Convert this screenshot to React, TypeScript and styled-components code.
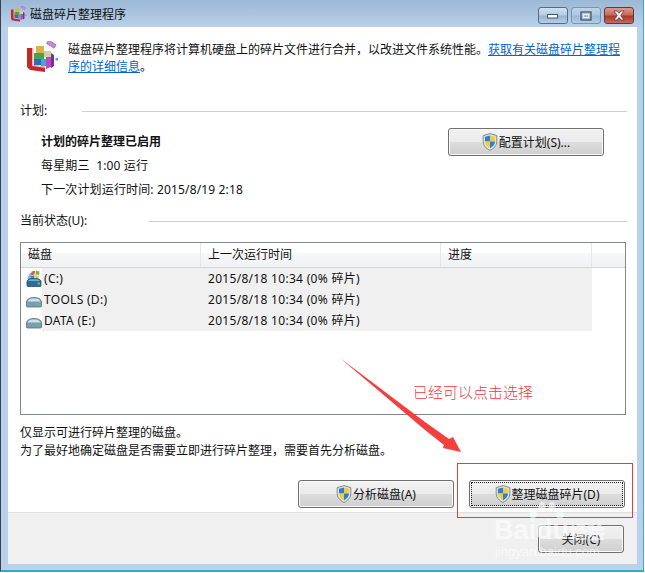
import React from "react";
import styled, { createGlobalStyle } from "styled-components";

const Global = createGlobalStyle`
  html, body {
    margin: 0;
    padding: 0;
    background: #fff;
  }
  body {
    font-family: "Noto Sans", "Noto Sans CJK SC", sans-serif;
    font-size: 12px;
    color: #111;
  }
`;

const Shield = ({ size = 16 }: { size?: number }) => (
  <svg width={size} height={size + 2} viewBox="0 0 16 18">
    <path d="M8 .6 L14.8 2.6 V8.5 C14.8 12.6 11.8 15.6 8 17.4 C4.2 15.6 1.2 12.6 1.2 8.5 V2.6 Z" fill="#dfe3e6" stroke="#7d8a94" strokeWidth="1" />
    <path d="M8 2.4 L3 3.8 V8.5 L8 8.5 Z" fill="#2f7fd0" />
    <path d="M8 2.4 L13 3.8 V8.5 L8 8.5 Z" fill="#f4cc3a" />
    <path d="M3 8.5 H8 V15.2 C5.2 13.8 3 11.6 3 8.5 Z" fill="#f4cc3a" />
    <path d="M13 8.5 H8 V15.2 C10.8 13.8 13 11.6 13 8.5 Z" fill="#2f7fd0" />
  </svg>
);

const DefragIcon = ({ size }: { size: number }) => (
  <svg width={size} height={size} viewBox="0 0 32 32">
    <rect x="20" y="1.5" width="9" height="4" transform="rotate(32 25 3)" fill="#c88ad8" stroke="#9a5bb0" strokeWidth=".6" />
    <path d="M0 7 H6 V24 L18 26 V31 L3 29 L0 26 Z" fill="#c22a2a" />
    <path d="M5 7 H6.5 V23.5 L18 25.5 V27 L5 25 Z" fill="#eeb4ac" />
    <rect x="9" y="5" width="8" height="7" fill="#d9b24a" />
    <rect x="7" y="12" width="10" height="6" fill="#3fa84c" />
    <rect x="7" y="18" width="7" height="6" fill="#3566c4" />
    <rect x="14" y="18" width="5" height="7" fill="#49a3d8" />
    <rect x="17" y="10" width="7" height="6" fill="#c9d3a0" />
    <path d="M19 16 H24 V26 L19 28 Z" fill="#b84ac0" />
    <path d="M24 12 L27 14 V25 L24 27 Z" fill="#7a2f92" />
    <rect x="28.5" y="17" width="2.5" height="2.5" fill="#3aa7e0" />
  </svg>
);

const DriveIcon = ({ system }: { system?: boolean }) => (
  <svg width="16" height="17" viewBox="0 0 16 17">
    {system && (
      <g>
        <path d="M1 9 L4 3 H6 L4 9 Z" fill="#7fb2e6" />
        <path d="M5.5 1.5 L9 .8 L8.6 4.6 L5 5.2 Z" fill="#dc5a3c" />
        <path d="M9.8 .8 L13.6 1.4 L13 5 L9.4 4.5 Z" fill="#78b642" />
        <path d="M4.8 5.8 L8.5 5.2 L8.2 9 L4.4 9.4 Z" fill="#3a86d6" />
        <path d="M9.3 5.2 L12.9 5.7 L12.4 9.2 L9 8.9 Z" fill="#f0c63a" />
      </g>
    )}
    <path
      d={system ? "M1 11 C2 9 4 8.5 8 8.5 C12 8.5 14 9 15 11 V15.5 Q15 16.5 14 16.5 H2 Q1 16.5 1 15.5 Z" : "M.5 10.5 C1.5 7.5 4 6.5 8 6.5 C12 6.5 14.5 7.5 15.5 10.5 V15 Q15.5 16 14.5 16 H1.5 Q.5 16 .5 15 Z"}
      fill={system ? "#2f6a9c" : "#7a9db5"}
      stroke={system ? "#24506f" : "#56707f"}
      strokeWidth=".8"
    />
    {!system && <path d="M1.5 10.5 C2.5 8 5 7.5 8 7.5 C11 7.5 13.5 8 14.5 10.5 Z" fill="#cfe0ea" />}
    {system && <path d="M2 11 C3 9.6 5 9.3 8 9.3 C11 9.3 13 9.6 14 11 Z" fill="#79aed6" />}
    <rect x="11.6" y="12.4" width="2.4" height="2.2" fill="#5cc45c" />
  </svg>
);

function MinGlyph() {
  return (
    <svg width="12" height="6" viewBox="0 0 12 6">
      <rect x=".5" y="1.5" width="10" height="3.5" fill="#fff" stroke="#46586c" />
    </svg>
  );
}

function MaxGlyph() {
  return (
    <svg width="12" height="10" viewBox="0 0 12 10">
      <rect x="1" y="1" width="10" height="8" fill="none" stroke="#3f4f60" strokeWidth="1.2" />
      <rect x="3.5" y="3.5" width="5" height="3" fill="none" stroke="#e8f0f8" strokeWidth="1" />
    </svg>
  );
}

function CloseGlyph() {
  return (
    <svg width="14" height="11" viewBox="0 0 14 11">
      <path d="M2 1 H5 L7 3.3 L9 1 H12 L8.7 5.5 L12 10 H9 L7 7.6 L5 10 H2 L5.3 5.5 Z" fill="#f4f4f4" stroke="#54303a" strokeWidth=".7" />
    </svg>
  );
}

const Frame = styled.div`
  width: 644px;
  height: 572px;
  display: flex;
  flex-direction: column;
  background: #b9d1ea;
  border-left: 1px solid #39424c;
  border-right: 1px solid #2bb0c4;
  border-bottom: 2px solid #2bb0c4;
  box-sizing: border-box;
`;

const TitleBar = styled.div`
  height: 27px;
  flex: none;
  display: flex;
  align-items: center;
  padding: 0 9px 0 10px;
  background: linear-gradient(#9cb8d5, #b9d1ea);
`;

const TitleText = styled.span`
  margin-left: 3px;
  font-size: 12px;
  color: #111;
  flex: 1;
`;

const CaptionGroup = styled.div`
  display: flex;
  gap: 3px;
  align-self: flex-start;
  margin-top: 7px;
`;

const CaptionButton = styled.div<{ $kind: "min" | "max" | "close" }>`
  width: 30px;
  height: 17px;
  box-sizing: border-box;
  display: flex;
  align-items: center;
  justify-content: center;
  border-radius: 3px;
  border: 1px solid ${(p) => (p.$kind === "close" ? "#5c3a3e" : p.$kind === "min" ? "#566a80" : "#7f93a8")};
  background: ${(p) =>
    p.$kind === "close"
      ? "linear-gradient(#d89a8c 0%, #c96b5c 45%, #a83a2c 55%, #c9695c 100%)"
      : p.$kind === "min"
        ? "linear-gradient(#cfe0f0 0%, #b5cde4 45%, #97b4d2 55%, #b6cfe6 100%)"
        : "linear-gradient(#bed3e8 0%, #afc8e0 45%, #9db9d6 55%, #b4cde6 100%)"};
`;

const Client = styled.div`
  flex: 1;
  margin: 0 6px 6px 7px;
  display: flex;
  flex-direction: column;
  background: #fff;
  min-height: 0;
`;

const Main = styled.div`
  flex: 1;
  padding: 14px 10px 0 12px;
`;

const Intro = styled.div`
  display: flex;
  gap: 9px;
  padding-left: 7px;
`;

const IntroText = styled.p`
  margin: 0;
  line-height: 17px;
  width: 556px;
`;

const Link = styled.a`
  color: #0066cc;
  text-decoration: underline;
`;

const GroupHeading = styled.div<{ $top: number; $gap: number }>`
  display: flex;
  align-items: center;
  gap: ${(p) => p.$gap}px;
  margin-top: ${(p) => p.$top}px;
  height: 16px;
  line-height: 16px;
`;

const Rule = styled.div`
  flex: 1;
  height: 1px;
  background: #cfcfcf;
`;

const Schedule = styled.div`
  display: flex;
  justify-content: space-between;
  align-items: flex-start;
  padding: 9px 23px 0 21px;
`;

const ScheduleLines = styled.div`
  display: flex;
  flex-direction: column;
  gap: 8px;
  padding-top: 6px;
`;

const ScheduleLine = styled.div<{ $bold?: boolean }>`
  line-height: 16px;
  font-weight: ${(p) => (p.$bold ? 700 : 400)};
  letter-spacing: ${(p) => (p.$bold ? 0 : 0.15)}px;
`;

const Button = styled.div<{ $w: number; $focus?: boolean }>`
  width: ${(p) => p.$w}px;
  height: 28px;
  box-sizing: border-box;
  display: flex;
  align-items: center;
  justify-content: center;
  gap: 1px;
  border: 1px solid #6f6f6f;
  border-radius: 3px;
  background: linear-gradient(#f2f2f2 0%, #ebebeb 48%, #dcdcdc 52%, #cfcfcf 100%);
  box-shadow: inset 0 0 0 1px #fafafa;
  color: #111;
  outline: ${(p) => (p.$focus ? "1px dotted #222" : "none")};
  outline-offset: -3px;
`;

const DiskList = styled.div`
  margin: 13px 1px 0 0;
  height: 173px;
  box-sizing: border-box;
  border: 1px solid #828790;
  display: flex;
  flex-direction: column;
`;

const ListHead = styled.div`
  display: grid;
  grid-template-columns: 180px 240px 151px 1fr;
  height: 25px;
  flex: none;
  border-bottom: 1px solid #d5d5d5;
  box-sizing: border-box;
  background: linear-gradient(#fff 0%, #fff 40%, #f6f7f9 42%, #f1f2f4 100%);
`;

const HeadCell = styled.div`
  border-right: 1px solid #e4e6e9;
  padding-left: 7px;
  line-height: 24px;
  &:last-child {
    border-right: 0;
  }
`;

const Row = styled.div`
  display: grid;
  grid-template-columns: 180px 240px 151px;
  height: 21px;
`;

const DiskCell = styled.div`
  display: flex;
  align-items: center;
  padding-left: 5px;
`;

const Shade = styled.div`
  background: #f0f0f0;
  height: 21px;
  flex: 1;
  padding-left: 2px;
  line-height: 21px;
  letter-spacing: 0.3px;
`;

const TimeCell = styled.div`
  background: #f0f0f0;
  padding-left: 7px;
  line-height: 21px;
  letter-spacing: 0.3px;
`;

const EmptyCell = styled.div`
  background: #f0f0f0;
`;

const Note = styled.div`
  margin-top: 9px;
  line-height: 18px;
`;

const ActionRow = styled.div`
  display: flex;
  justify-content: flex-end;
  gap: 15px;
  padding-right: 2px;
  margin-top: 20px;
`;

const Footer = styled.div`
  height: 52px;
  flex: none;
  box-sizing: border-box;
  background: #f0f0f0;
  border-top: 1px solid #dfdfdf;
  display: flex;
  justify-content: flex-end;
  padding: 12px 13px 0 0;
`;

const CloseButton = styled(Button)`
  color: #222;
`;

const ArrowLayer = styled.svg`
  position: absolute;
  left: 0;
  top: 0;
  pointer-events: none;
`;

const Remark = styled.div`
  position: absolute;
  left: 413px;
  top: 382px;
  font-size: 15px;
  line-height: 20px;
  color: #f03a3a;
  font-family: "Noto Sans CJK SC", sans-serif;
  font-weight: 300;
`;

const Highlight = styled.div`
  position: absolute;
  left: 457px;
  top: 463px;
  width: 176px;
  height: 55px;
  border: 1px solid #ee3a3a;
  box-sizing: border-box;
`;

const Watermark = styled.div`
  position: absolute;
  left: 494px;
  top: 515px;
  color: rgba(255, 255, 255, 0.6);
  font-family: "Liberation Sans", sans-serif;
  font-weight: 700;
  font-size: 27px;
  line-height: 30px;
  white-space: nowrap;
`;

const WatermarkCn = styled.span`
  font-family: "Noto Sans CJK SC", sans-serif;
  font-size: 18px;
`;

const WatermarkUrl = styled.div`
  font-size: 13px;
  line-height: 16px;
  margin-left: 1px;
  margin-top: -2px;
  font-weight: 400;
`;

const Paw = styled.svg`
  position: absolute;
  left: 528px;
  top: 502px;
`;

const Page = styled.div`
  position: relative;
  width: 645px;
  height: 573px;
  overflow: hidden;
`;

const disks = [
  { name: "(C:)", system: true },
  { name: "TOOLS (D:)" },
  { name: "DATA (E:)" },
];

export default function App() {
  return (
    <Page>
      <Global />
      <Frame>
        <TitleBar>
          <DefragIcon size={16} />
          <TitleText>磁盘碎片整理程序</TitleText>
          <CaptionGroup>
            <CaptionButton $kind="min"><MinGlyph /></CaptionButton>
            <CaptionButton $kind="max"><MaxGlyph /></CaptionButton>
            <CaptionButton $kind="close"><CloseGlyph /></CaptionButton>
          </CaptionGroup>
        </TitleBar>
        <Client>
          <Main>
            <Intro>
              <DefragIcon size={32} />
              <IntroText>
                磁盘碎片整理程序将计算机硬盘上的碎片文件进行合并，以改进文件系统性能。
                <Link>获取有关磁盘碎片整理程序的详细信息</Link>。
              </IntroText>
            </Intro>
            <GroupHeading $top={28} $gap={35}>
              <span>计划:</span>
              <Rule />
            </GroupHeading>
            <Schedule>
              <ScheduleLines>
                <ScheduleLine $bold>计划的碎片整理已启用</ScheduleLine>
                <ScheduleLine>每星期三&nbsp;&nbsp;1:00 运行</ScheduleLine>
                <ScheduleLine>下一次计划运行时间: 2015/8/19 2:18</ScheduleLine>
              </ScheduleLines>
              <Button $w={156}>
                <Shield />
                配置计划(S)...
              </Button>
            </Schedule>
            <GroupHeading $top={15} $gap={62}>
              <span>当前状态(U):</span>
              <Rule />
            </GroupHeading>
            <DiskList>
              <ListHead>
                <HeadCell>磁盘</HeadCell>
                <HeadCell>上一次运行时间</HeadCell>
                <HeadCell>进度</HeadCell>
                <HeadCell />
              </ListHead>
              {disks.map((d) => (
                <Row key={d.name}>
                  <DiskCell>
                    <DriveIcon system={d.system} />
                    <Shade>{d.name}</Shade>
                  </DiskCell>
                  <TimeCell>2015/8/18 10:34 (0% 碎片)</TimeCell>
                  <EmptyCell />
                </Row>
              ))}
            </DiskList>
            <Note>
              仅显示可进行碎片整理的磁盘。
              <br />
              为了最好地确定磁盘是否需要立即进行碎片整理，需要首先分析磁盘。
            </Note>
            <ActionRow>
              <Button $w={156}>
                <Shield />
                分析磁盘(A)
              </Button>
              <Button $w={156} $focus>
                <Shield />
                整理磁盘碎片(D)
              </Button>
            </ActionRow>
          </Main>
          <Footer>
            <CloseButton $w={86}>关闭(C)</CloseButton>
          </Footer>
        </Client>
      </Frame>
      <ArrowLayer width="645" height="573" viewBox="0 0 645 573">
        <polygon points="340,358 425,422 449,439 453,437 461,452 443,448 444,445 425,430" fill="#f43f3f" />
      </ArrowLayer>
      <Remark>已经可以点击选择</Remark>
      <Highlight />
      <Paw width="36" height="22" viewBox="0 0 36 22">
        <g fill="rgba(255,255,255,.6)">
          <ellipse cx="5" cy="12" rx="3.5" ry="5" />
          <ellipse cx="14" cy="5" rx="3.5" ry="5" />
          <ellipse cx="24" cy="5" rx="3.5" ry="5" />
          <ellipse cx="32" cy="13" rx="3.5" ry="5" />
        </g>
      </Paw>
      <Watermark>
        Baidu<WatermarkCn>经验</WatermarkCn>
        <WatermarkUrl>jingyan.baidu.com</WatermarkUrl>
      </Watermark>
    </Page>
  );
}
